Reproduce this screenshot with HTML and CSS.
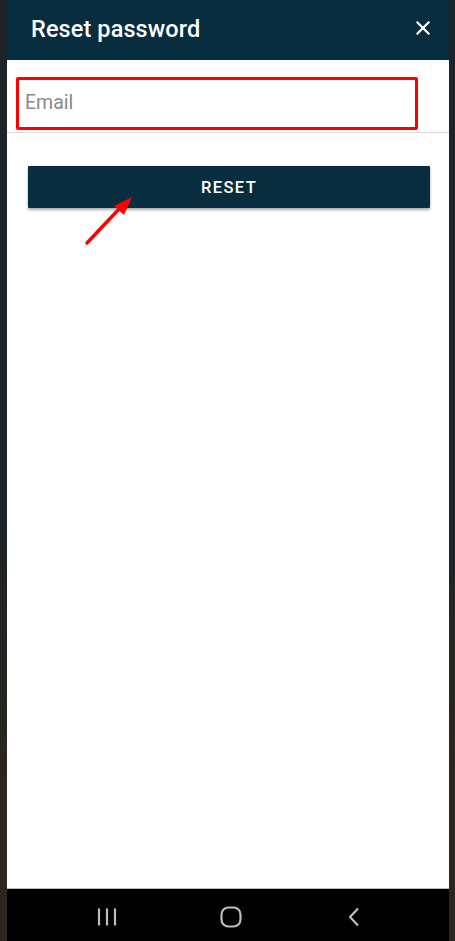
FILE: index.html
```html
<!DOCTYPE html>
<html>
<head>
<meta charset="utf-8">
<link rel="stylesheet" href="styles.css">
</head>
<body>
<div class="screen">
  <header class="topbar">
    <h1 class="title">Reset password</h1>
    <svg class="close" width="14" height="14" viewBox="0 0 14 14"><path d="M1.5 1.5 L12.5 12.5 M12.5 1.5 L1.5 12.5" stroke="#fff" stroke-width="2.2" stroke-linecap="square"/></svg>
  </header>
  <main class="content">
    <div class="field">
      <div class="highlight"><span class="placeholder">Email</span></div>
    </div>
    <div class="underline"></div>
    <div class="actions">
      <button class="reset">RESET</button>
    </div>
    <svg class="arrow" width="60" height="60" viewBox="0 0 60 60">
      <line x1="3" y1="50" x2="36" y2="15" stroke="#ff0000" stroke-width="3.5" stroke-linecap="round"/>
      <polygon points="48,4 30,13 40,22" fill="#ff0000"/>
    </svg>
  </main>
  <nav class="navbar">
    <svg width="20" height="20" viewBox="0 0 20 20"><path d="M2 1.5 V18.5 M10 1.5 V18.5 M18 1.5 V18.5" stroke="#bdbdbd" stroke-width="2.2"/></svg>
    <svg class="home" width="22" height="22" viewBox="0 0 22 22"><rect x="1.5" y="1.5" width="19" height="19" rx="7" fill="none" stroke="#bdbdbd" stroke-width="2.2"/></svg>
    <svg width="12" height="20" viewBox="0 0 12 20"><path d="M10 1.5 L2 10 L10 18.5" fill="none" stroke="#bdbdbd" stroke-width="2.2" stroke-linejoin="round"/></svg>
  </nav>
</div>
</body>
</html>
```

FILE: styles.css
```css
html, body {
  margin: 0;
  padding: 0;
  height: 100%;
}
body {
  background: linear-gradient(#1e2327 0%, #1f2428 55%, #2a261f 80%, #2b271f 100%);
  font-family: Roboto, "Liberation Sans", sans-serif;
}
.screen {
  margin: 0 6px 0 7px;
  height: 941px;
  display: flex;
  flex-direction: column;
  background: #fff;
}
.topbar {
  height: 60px;
  background: #072d3f;
  display: flex;
  align-items: center;
  justify-content: space-between;
  padding: 0 19px 0 24px;
  flex-shrink: 0;
}
.title {
  margin: 0;
  color: #fff;
  font-size: 23.5px;
  font-weight: 500;
  letter-spacing: 0.1px;
  padding-bottom: 2px;
}
.close {
  margin-top: -4px;
}
.content {
  flex: 1;
  position: relative;
  background: #fff;
  border-bottom: 1px solid #bcbcbc;
}
.field {
  padding: 17px 31px 0 9px;
}
.highlight {
  height: 46.5px;
  border: 3.5px solid #ff0000;
  border-radius: 2px;
  display: flex;
  align-items: center;
  padding-left: 6px;
}
.placeholder {
  color: #8a8a8a;
  font-size: 19.5px;
  padding-bottom: 1px;
}
.underline {
  margin-top: 2.5px;
  height: 1px;
  background: #dcdcdc;
}
.actions {
  padding: 33px 19px 0 21px;
}
.reset {
  width: 100%;
  height: 42px;
  border: none;
  border-radius: 1px;
  background: #072d3f;
  color: #fff;
  font-family: Roboto, "Liberation Sans", sans-serif;
  font-size: 16.5px;
  font-weight: 500;
  letter-spacing: 1.4px;
  box-shadow: 0 2px 3px rgba(0,0,0,0.35);
  padding: 0;
}
.arrow {
  position: absolute;
  left: 77px;
  top: 133px;
}
.navbar {
  height: 52px;
  flex-shrink: 0;
  background: #000;
  display: flex;
  align-items: center;
  justify-content: space-between;
  padding: 4px 89px 0 90px;
  box-sizing: border-box;
}
.home {
  margin-right: 4px;
}
```
